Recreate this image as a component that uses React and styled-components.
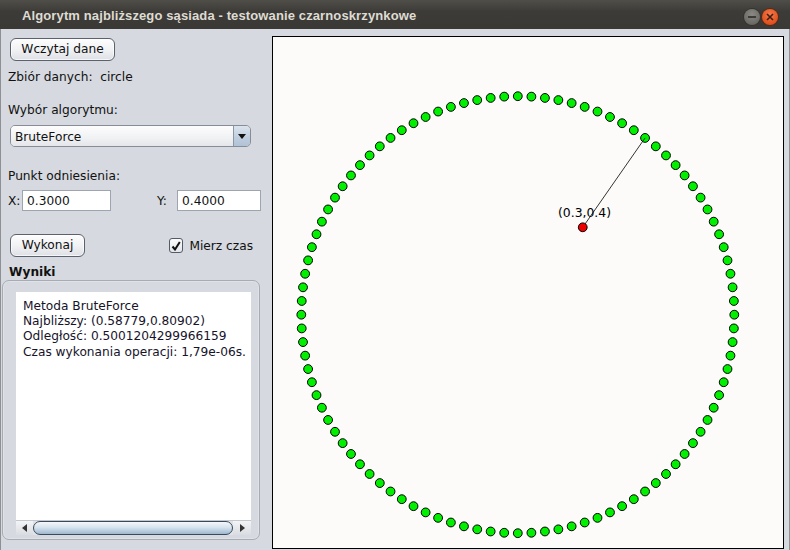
import styled, { createGlobalStyle } from "styled-components";

const GlobalStyle = createGlobalStyle`
  html, body {
    margin: 0;
    padding: 0;
    overflow: hidden;
    background: #d6d9df;
  }
  * {
    box-sizing: border-box;
  }
`;

const Window = styled.div`
  width: 790px;
  height: 550px;
  display: flex;
  flex-direction: column;
  font-family: "DejaVu Sans", "Noto Sans", sans-serif;
  font-size: 12.2px;
  color: #111;
`;

const TitleBar = styled.div`
  height: 29px;
  flex: none;
  display: flex;
  align-items: center;
  justify-content: space-between;
  padding: 0 12px 0 22px;
  background: linear-gradient(#4f4e49, #3c3b37 40%, #3a3935);
`;

const Title = styled.span`
  color: #dfdbd2;
  font-family: "Liberation Sans", "DejaVu Sans", sans-serif;
  font-weight: bold;
  font-size: 13px;
  letter-spacing: 0.12px;
  padding-top: 1px;
`;

const WindowControls = styled.div`
  display: flex;
  gap: 2px;
  padding-top: 5px;
`;

const RoundButton = styled.div`
  width: 16px;
  height: 16px;
  border-radius: 50%;
  display: flex;
  align-items: center;
  justify-content: center;
  background: ${(p) =>
    p.close
      ? "radial-gradient(circle at 50% 35%, #f57a4b, #e2501c 70%, #c9420f)"
      : "radial-gradient(circle at 50% 35%, #8a8984, #6b6a65 70%, #55544f)"};
  box-shadow: 0 0 0 1px ${(p) => (p.close ? "#5a2a14" : "#34332f")};
`;

const Body = styled.div`
  flex: 1;
  display: flex;
  background: #d6d9df;
  padding: 7px 5px 1px 0;
  border-left: 1px solid #8e9096;
  border-right: 1px solid #8e9096;
`;

const Sidebar = styled.div`
  width: 271px;
  flex: none;
  display: flex;
  flex-direction: column;
  padding: 2px 11px 0 0;
`;

const Button = styled.div`
  width: ${(p) => p.width}px;
  height: 23px;
  margin-left: ${(p) => p.indent || 0}px;
  display: flex;
  align-items: center;
  justify-content: center;
  border: 1px solid #5b616d;
  border-radius: 6px;
  background: linear-gradient(#fdfdfd, #f1f2f4 50%, #dde0e5);
  box-shadow: inset 0 0 0 1px rgba(255, 255, 255, 0.7);
  padding-bottom: 1px;
`;

const Label = styled.div`
  line-height: 16px;
  padding-top: 1px;
  margin-top: ${(p) => p.top || 0}px;
  margin-left: ${(p) => (p.indent === undefined ? 7 : p.indent)}px;
  font-weight: ${(p) => (p.bold ? "bold" : "normal")};
  white-space: pre;
`;

const Combo = styled.div`
  width: 241px;
  height: 22px;
  margin: 7px 0 0 9px;
  display: flex;
  border: 1px solid #878c96;
  border-radius: 5px;
  overflow: hidden;
`;

const ComboValue = styled.div`
  flex: 1;
  display: flex;
  align-items: center;
  padding: 1px 0 0 4px;
  background: linear-gradient(#fdfdfd, #f0f1f3 60%, #e3e5e9);
`;

const ComboArrow = styled.div`
  width: 17px;
  display: flex;
  align-items: center;
  justify-content: center;
  border-left: 1px solid #8d97a4;
  background: linear-gradient(#dbe4ee, #c0cfdf 55%, #b0c2d6);
`;

const Row = styled.div`
  display: flex;
  align-items: center;
  margin-top: ${(p) => p.top}px;
  padding-left: ${(p) => p.indent}px;
`;

const Field = styled.div`
  display: flex;
  align-items: center;
  margin-left: ${(p) => (p.push ? "auto" : "0")};
`;

const FieldLabel = styled.span`
  width: ${(p) => p.width}px;
`;

const Input = styled.div`
  width: ${(p) => p.width}px;
  height: 21px;
  display: flex;
  align-items: center;
  padding-left: 4px;
  background: #fff;
  border: 1px solid #9fa5af;
`;

const CheckField = styled.label`
  display: flex;
  align-items: center;
  gap: 6px;
  margin-left: auto;
  margin-right: 8px;
`;

const CheckBox = styled.div`
  width: 14px;
  height: 15px;
  display: flex;
  align-items: center;
  justify-content: center;
  border: 1px solid #555b66;
  border-radius: 3px;
  background: linear-gradient(#fdfdfd, #e2e5ea);
`;

const Group = styled.div`
  width: 258px;
  height: 260px;
  margin-left: 1px;
  display: flex;
  flex-direction: column;
  padding: 11px 8px 4px 13px;
  border: 1px solid #a6abb4;
  border-radius: 7px;
  box-shadow: inset 0 0 0 1px #dfe2e7;
`;

const ResultText = styled.div`
  flex: 1;
  background: #fff;
  padding: 7px 0 0 7px;
  line-height: 15.2px;
  white-space: pre;
  overflow: hidden;
  color: #16132a;
`;

const ScrollBar = styled.div`
  height: 15px;
  display: flex;
  background: #e1e3e7;
  border-top: 1px solid #c3c7ce;
`;

const ScrollArrow = styled.div`
  width: ${(p) => p.width}px;
  display: flex;
  align-items: center;
  justify-content: center;
  background: linear-gradient(#f3f4f6, #d9dce1);
`;

const ScrollThumb = styled.div`
  flex: 1;
  border: 1px solid #3a4a5c;
  border-radius: 8px;
  background: linear-gradient(#f4f7fa, #d7e3ee 45%, #b3c8dc 80%, #9eb6cd);
`;

const CanvasFrame = styled.div`
  width: 512px;
  height: 513px;
  flex: none;
  border: 1px solid #000;
  background: #fcfbf9;
`;

const CX = 244.8;
const CY = 277.7;
const SX = 216.5;
const SY = 218.5;

const points = Array.from({ length: 100 }, (_, i) => {
  const a = (i * 3.6 * Math.PI) / 180;
  return { x: CX + Math.cos(a) * SX, y: CY - Math.sin(a) * SY };
});

const ref = { x: CX + 0.3 * SX, y: CY - 0.4 * SY };
const nearest = points[15];

function Triangle({ dir }) {
  const d = {
    down: "M0 0 L8 0 L4 5 Z",
    left: "M5 0 L5 8 L0 4 Z",
    right: "M0 0 L0 8 L5 4 Z",
  }[dir];
  const w = dir === "down" ? 8 : 5;
  const h = dir === "down" ? 5 : 8;
  return (
    <svg width={w} height={h} viewBox={`0 0 ${w} ${h}`}>
      <path d={d} fill={dir === "down" ? "#111" : "#333"} />
    </svg>
  );
}

function PointsCanvas() {
  return (
    <svg width="510" height="511" viewBox="0 0 510 511">
      {points.map((p, i) => (
        <circle
          key={i}
          cx={p.x}
          cy={p.y}
          r="4.4"
          fill="#00f000"
          stroke="#000"
          strokeWidth="1"
        />
      ))}
      <line
        x1={ref.x}
        y1={ref.y}
        x2={nearest.x}
        y2={nearest.y}
        stroke="#000"
        strokeWidth="0.8"
      />
      <circle cx={ref.x} cy={ref.y} r="4.4" fill="#ee0000" stroke="#000" />
      <text
        x={285}
        y={179.5}
        fontFamily="DejaVu Sans, sans-serif"
        fontSize="12.4"
        fill="#000"
      >
        (0.3,0.4)
      </text>
    </svg>
  );
}

export default function App() {
  return (
    <>
      <GlobalStyle />
      <Window>
        <TitleBar>
          <Title>Algorytm najbliższego sąsiada - testowanie czarnoskrzynkowe</Title>
          <WindowControls>
            <RoundButton>
              <svg width="8" height="2">
                <rect width="8" height="2" fill="#3c3b37" />
              </svg>
            </RoundButton>
            <RoundButton close>
              <svg width="8" height="8" viewBox="0 0 8 8">
                <path d="M1 1 L7 7 M7 1 L1 7" stroke="#3c2014" strokeWidth="1.6" />
              </svg>
            </RoundButton>
          </WindowControls>
        </TitleBar>
        <Body>
          <Sidebar>
            <Button width={105} indent={9}>
              Wczytaj dane
            </Button>
            <Label top={7}>{"Zbiór danych:  circle"}</Label>
            <Label top={16}>Wybór algorytmu:</Label>
            <Combo>
              <ComboValue>BruteForce</ComboValue>
              <ComboArrow>
                <Triangle dir="down" />
              </ComboArrow>
            </Combo>
            <Label top={20}>Punkt odniesienia:</Label>
            <Row top={6} indent={7}>
              <Field>
                <FieldLabel width={14}>X:</FieldLabel>
                <Input width={89}>0.3000</Input>
              </Field>
              <Field push>
                <FieldLabel width={20}>Y:</FieldLabel>
                <Input width={84}>0.4000</Input>
              </Field>
            </Row>
            <Row top={23} indent={9}>
              <Button width={75}>Wykonaj</Button>
              <CheckField>
                <CheckBox>
                  <svg width="10" height="10" viewBox="0 0 10 10">
                    <path
                      d="M1.5 5.5 L4 8.5 L8.8 1"
                      fill="none"
                      stroke="#111"
                      strokeWidth="2"
                    />
                  </svg>
                </CheckBox>
                Mierz czas
              </CheckField>
            </Row>
            <Label top={6} indent={8} bold>
              Wyniki
            </Label>
            <Group>
              <ResultText>
                {"Metoda BruteForce\nNajbliższy: (0.58779,0.80902)\nOdległość: 0.5001204299966159\nCzas wykonania operacji: 1,79e-06s."}
              </ResultText>
              <ScrollBar>
                <ScrollArrow width={17}>
                  <Triangle dir="left" />
                </ScrollArrow>
                <ScrollThumb />
                <ScrollArrow width={18}>
                  <Triangle dir="right" />
                </ScrollArrow>
              </ScrollBar>
            </Group>
          </Sidebar>
          <CanvasFrame>
            <PointsCanvas />
          </CanvasFrame>
        </Body>
      </Window>
    </>
  );
}
